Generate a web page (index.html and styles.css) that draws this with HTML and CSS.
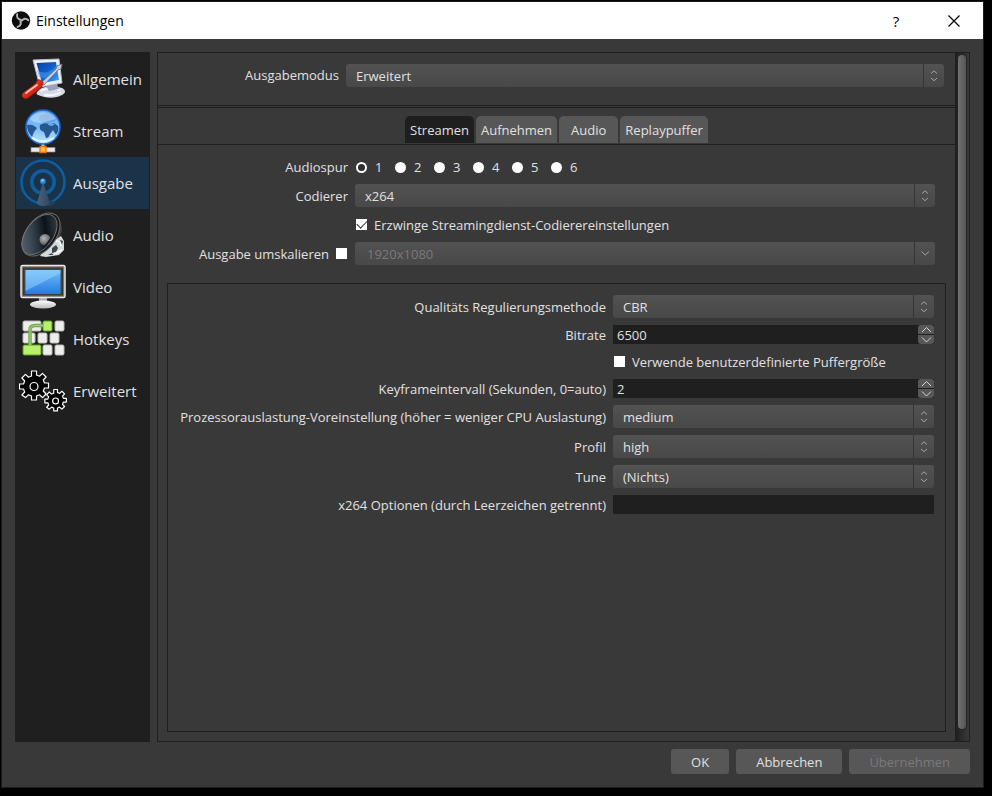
FILE: index.html
```html
<!DOCTYPE html>
<html lang="de">
<head>
<meta charset="utf-8">
<title>Einstellungen</title>
<link rel="stylesheet" href="styles.css">
</head>
<body>
<svg class="defs" width="0" height="0" aria-hidden="true">
  <defs>
    <symbol id="updown" viewBox="0 0 20 23"><path d="M7 9.500 10 6.800 13 9.500M7 14 10 16.700 13 14"/></symbol>
    <symbol id="down" viewBox="0 0 20 23"><path d="M6.500 9.500 10.200 13 14 9.500"/></symbol>
    <symbol id="spin-up" viewBox="0 0 16 9"><path d="M4 7 8.500 2.500 13 7"/></symbol>
    <symbol id="spin-down" viewBox="0 0 16 9"><path d="M4 2.500 8.500 7 13 2.500"/></symbol>
  </defs>
</svg>
<div class="window">
  <header class="titlebar">
    <svg class="logo" width="20" height="20" viewBox="0 0 20 20" aria-hidden="true">
      <circle cx="10" cy="9.500" r="9.200" fill="#0c0c0c"/>
      <g fill="none" stroke="#b4b4b4" stroke-width="2" stroke-linecap="round">
        <path d="M6.200 3.300c-.8 3 .8 5 3.600 5.400"/>
        <path d="M6.200 3.300c-.8 3 .8 5 3.600 5.400" transform="rotate(120 10 9.500)"/>
        <path d="M6.200 3.300c-.8 3 .8 5 3.600 5.400" transform="rotate(240 10 9.500)"/>
      </g>
    </svg>
    <h1 class="title">Einstellungen</h1>
    <button class="caption help" type="button" aria-label="Hilfe">?</button>
    <button class="caption close" type="button" aria-label="Schließen">
      <svg width="12" height="12" viewBox="0 0 12 12"><path d="M.5.5l11 11M11.500.5l-11 11" stroke="#000" stroke-width="1.200"/></svg>
    </button>
  </header>

  <div class="content">
    <div class="panes">
      <nav class="sidebar">
        <a class="item" href="#allgemein">
          <svg width="48" height="48" viewBox="0 0 48 48" aria-hidden="true">
            <defs>
              <linearGradient id="g-scr" x1="0" y1="0" x2="1" y2="1"><stop offset="0" stop-color="#0a3d9e"/><stop offset=".6" stop-color="#1268d8"/><stop offset="1" stop-color="#4bb0ff"/></linearGradient>
              <linearGradient id="g-red" x1="0" y1="0" x2="1" y2="1"><stop offset="0" stop-color="#ff8a76"/><stop offset=".5" stop-color="#dd2a18"/><stop offset="1" stop-color="#9b0f08"/></linearGradient>
            </defs>
            <path d="M19 36c4-5 15-6 24-3 4 2 4 5 0 7-7 4-17 3-24 0-2-1-2-2 0-4z" fill="#d5d9e6"/>
            <path d="M21 36c6-3 13-3 20-1M25 40c7 1 12 0 17-3" stroke="#f8f9ff" stroke-width="2" fill="none"/>
            <path d="M26 30l12-1 2 5-10 2z" fill="#9aa1b8"/>
            <path d="M14 5 40 4l3 24-22 4z" fill="#edf0f8" stroke="#b5bbcc"/>
            <path d="M17.500 8 37 7l3 18-17 3z" fill="url(#g-scr)"/>
            <path d="M18 15c8 5 14 2 20-5l1 8c-7 5-13 6-19 4z" fill="#4ba2f0" opacity=".5"/>
            <path d="M22 28 37 14l1-3 5-2-1 5-3 1-14 15z" fill="#c9ced9" stroke="#666e80" stroke-width=".8"/>
            <path d="M19 25c2-1 6 2 5 4l-2 4L9 43c-3 2-8-1-5-5l12-9z" fill="url(#g-red)" stroke="#8d140d" stroke-width=".7"/>
            <path d="M7 38 18 30" stroke="#ffc1b5" stroke-width="1.800" stroke-linecap="round"/>
          </svg>
          <span>Allgemein</span></a>
        <a class="item" href="#stream">
          <svg width="48" height="48" viewBox="0 0 48 48" aria-hidden="true">
            <defs><linearGradient id="g-globe" x1="0" y1="0" x2="0" y2="1"><stop offset="0" stop-color="#63aef5"/><stop offset=".5" stop-color="#79b9fa"/><stop offset="1" stop-color="#bfe4ff"/></linearGradient></defs>
            <path d="M24 34v10" stroke="#d8d8d8" stroke-width="3"/>
            <path d="M12 40.500h24v4.500H12z" fill="#e9e9ee" stroke="#8c8c96" stroke-width=".7"/>
            <path d="M21 39.500h6v6h-6z" fill="#ffc234" stroke="#ef6d12" stroke-width="1.300"/>
            <circle cx="24" cy="20" r="17" fill="url(#g-globe)" stroke="#1767cb" stroke-width="1.600"/>
            <path d="M8 18c4-1 7 0 10 3l-3 4-2 5c-3-3-5-7-5-12zM21 18c3-2 6-2 10-1l4-1 4 3c1 4 0 6-2 9l-3-5-3 4c-1 3-2 4-4 4l-2-6c-3-1-5-3-4-7z" fill="#24588f"/>
            <path d="M30 16l6 1-3 2-4-1z" fill="#69aaf0"/>
            <path d="M20 10c4-5 13-4 18 2-3 4-14 5-18 1z" fill="#5d9ad8" opacity=".8"/>
            <path d="M11 12C16 3 31 3 37 12c-8 2-17 6-24 2z" fill="#fff" opacity=".35"/>
            <path d="M13 31c7 4 15 4 22 0" fill="none" stroke="#e8f7ff" stroke-width="2"/>
          </svg>
          <span>Stream</span></a>
        <a class="item active" href="#ausgabe" aria-current="page">
          <svg width="48" height="48" viewBox="0 0 48 48" aria-hidden="true">
            <defs>
              <linearGradient id="g-cone" x1="0" x2="1"><stop offset="0" stop-color="#4a627c"/><stop offset="1" stop-color="#30465f"/></linearGradient>
              <radialGradient id="g-dot" cx=".4" cy=".3"><stop offset="0" stop-color="#8fd2ff"/><stop offset="1" stop-color="#1476d0"/></radialGradient>
            </defs>
            <circle cx="24" cy="23" r="21.500" fill="none" stroke="#0f5d9f" stroke-width="2.500"/>
            <circle cx="24" cy="23" r="11.200" fill="none" stroke="#0f5d9f" stroke-width="3.500"/>
            <ellipse cx="28" cy="44" rx="8" ry="3" fill="#263f5a"/>
            <path d="M24 23 31 44c-3 4-11 4-13 0z" fill="url(#g-cone)"/>
            <circle cx="24" cy="22.500" r="2.900" fill="url(#g-dot)"/>
          </svg>
          <span>Ausgabe</span></a>
        <a class="item" href="#audio">
          <svg width="48" height="48" viewBox="0 0 48 48" aria-hidden="true">
            <defs>
              <linearGradient id="g-horn" x1="0" x2="1" y1=".2" y2=".8"><stop offset="0" stop-color="#586773"/><stop offset=".35" stop-color="#33414d"/><stop offset=".65" stop-color="#0c1219"/><stop offset="1" stop-color="#39434c"/></linearGradient>
              <radialGradient id="g-cap" cx=".4" cy=".4"><stop offset="0" stop-color="#b6b6b4"/><stop offset="1" stop-color="#6b6c6e"/></radialGradient>
            </defs>
            <path d="M37 5c4 4 6 9 6 15l-5 13-12 11 1-12z" fill="#3c403e"/>
            <path d="M30 33 42 25l3 5v9l-5 5-13 2-6-1z" fill="#d4dadd"/>
            <path d="M33 37l4-3 2 3-2 4-4 1zM41 29l3 1-1 4zM29 44l4-2 1 2z" fill="#3c4549"/>
            <path d="M37 30c3 0 5 2 5 5M35 43l8-4" stroke="#fff" stroke-width="1.500" fill="none"/>
            <ellipse cx="22" cy="23.500" rx="24.500" ry="15" transform="rotate(-53 22 23.500)" fill="#171717" stroke="#686a66"/>
            <ellipse cx="20.500" cy="23.500" rx="23" ry="13.500" transform="rotate(-53 20.500 23.500)" fill="url(#g-horn)" stroke="#77797a" stroke-width=".8"/>
            <circle cx="26" cy="28.500" r="5.500" fill="url(#g-cap)"/>
            <path d="M23 37c5-3 8-7 10-12" fill="none" stroke="#1a1f24" stroke-width="2"/>
          </svg>
          <span>Audio</span></a>
        <a class="item" href="#video">
          <svg width="48" height="48" viewBox="0 0 48 48" aria-hidden="true">
            <defs>
              <linearGradient id="g-tv" x1="0" x2="0" y1="0" y2="1"><stop offset="0" stop-color="#6cc0f8"/><stop offset="1" stop-color="#2879e3"/></linearGradient>
              <linearGradient id="g-foot" x1="0" x2="0" y1="0" y2="1"><stop offset="0" stop-color="#fff"/><stop offset="1" stop-color="#b9b9b9"/></linearGradient>
            </defs>
            <path d="M20 33h8v8h-8z" fill="#aaa"/>
            <ellipse cx="24" cy="41.500" rx="13" ry="4" fill="url(#g-foot)"/>
            <rect x="2" y="2.500" width="44" height="32" rx="1.500" fill="#777" stroke="#e9e9e9" stroke-width="1.500"/>
            <rect x="4.500" y="5" width="39" height="27" fill="#444" stroke="#343434"/>
            <rect x="6.500" y="7" width="35" height="24" fill="url(#g-tv)"/>
            <path d="M6.500 7h35v3L6.500 28z" fill="#9bd5ff" opacity=".5"/>
          </svg>
          <span>Video</span></a>
        <a class="item" href="#hotkeys">
          <svg width="48" height="48" viewBox="0 0 48 48" aria-hidden="true">
            <g fill="#ededeb" stroke="#b7b8b4">
              <rect x="4" y="6" width="18" height="10" rx="1.500"/><rect x="36" y="6" width="9" height="10" rx="1.500"/>
              <rect x="4" y="18" width="12" height="10" rx="1.500"/><rect x="19" y="18" width="9" height="10" rx="1.500"/><rect x="31" y="18" width="9" height="10" rx="1.500"/>
              <rect x="24" y="30" width="9" height="10" rx="1.500"/><rect x="36" y="30" width="9" height="10" rx="1.500"/>
            </g>
            <g fill="#b8ef6f" stroke="#5aa313">
              <rect x="24" y="6" width="9" height="10" rx="1.500"/><rect x="4" y="30" width="18" height="10" rx="1.500"/>
            </g>
            <path d="M11 30V15q0-4.500 5-4.500h8" fill="none" stroke="#75ac4c" stroke-width="3.500"/>
            <path d="M11 30V15q0-4.500 5-4.500h8" fill="none" stroke="#a6cc89" stroke-width="1"/>
          </svg>
          <span>Hotkeys</span></a>
        <a class="item" href="#erweitert">
          <svg width="48" height="48" viewBox="0 0 48 48" aria-hidden="true">
            <g transform="translate(0 2)" fill="#000" stroke="#fff" stroke-width="1.200" stroke-linejoin="round">
              <path d="M12.500 2h5v4l3 1.200 3-2.800 3.600 3.600-2.800 3 1.200 3h4v5h-4l-1.200 3 2.800 3-3.600 3.600-3-2.800-3 1.200v4h-5v-4l-3-1.200-3 2.800L2.900 26l2.800-3L4.500 20h-4v-5h4l1.200-3-2.800-3 3.600-3.600 3 2.800 3-1.200z"/>
              <circle cx="15" cy="17.500" r="4"/>
            </g>
            <g transform="translate(25.500 21) scale(.74)" fill="#000" stroke="#fff" stroke-width="1.600" stroke-linejoin="round">
              <path d="M12.500 2h5v4l3 1.200 3-2.800 3.600 3.600-2.800 3 1.200 3h4v5h-4l-1.200 3 2.800 3-3.600 3.600-3-2.800-3 1.200v4h-5v-4l-3-1.200-3 2.800L2.900 26l2.800-3L4.500 20h-4v-5h4l1.200-3-2.800-3 3.600-3.600 3 2.800 3-1.200z"/>
              <circle cx="15" cy="17.500" r="4"/>
            </g>
          </svg>
          <span>Erweitert</span></a>
      </nav>

      <main class="frame">
        <div class="page">
          <section class="mode">
            <label for="mode">Ausgabemodus</label>
            <div class="combo"><select id="mode"><option>Erweitert</option><option>Einfach</option></select><svg class="arrow"><use href="#updown"/></svg></div>
          </section>

          <section class="tabarea">
            <div class="tabs" role="tablist">
              <button class="tab selected" role="tab" aria-selected="true" type="button">Streamen</button>
              <button class="tab" role="tab" aria-selected="false" type="button">Aufnehmen</button>
              <button class="tab wide" role="tab" aria-selected="false" type="button">Audio</button>
              <button class="tab" role="tab" aria-selected="false" type="button">Replaypuffer</button>
            </div>

            <div class="pane" role="tabpanel">
              <div class="form outer">
                <span class="label" id="track">Audiospur</span>
                <div class="radios" role="radiogroup" aria-labelledby="track">
                  <label class="radio"><input type="radio" name="track" checked>1</label>
                  <label class="radio"><input type="radio" name="track">2</label>
                  <label class="radio"><input type="radio" name="track">3</label>
                  <label class="radio"><input type="radio" name="track">4</label>
                  <label class="radio"><input type="radio" name="track">5</label>
                  <label class="radio"><input type="radio" name="track">6</label>
                </div>

                <label class="label" for="encoder">Codierer</label>
                <div class="combo"><select id="encoder"><option>x264</option></select><svg class="arrow"><use href="#updown"/></svg></div>

                <label class="check field"><input type="checkbox" checked>Erzwinge Streamingdienst-Codierereinstellungen</label>

                <label class="check trailing">Ausgabe umskalieren<input type="checkbox"></label>
                <div class="combo"><select id="rescale" aria-label="Auflösung" disabled><option>1920x1080</option></select><svg class="arrow"><use href="#down"/></svg></div>
              </div>

              <div class="group">
                <div class="form inner">
                  <label class="label" for="rate">Qualitäts Regulierungsmethode</label>
                  <div class="combo"><select id="rate"><option>CBR</option></select><svg class="arrow"><use href="#updown"/></svg></div>

                  <label class="label" for="bitrate">Bitrate</label>
                  <div class="spin"><input id="bitrate" type="text" inputmode="numeric" value="6500">
                    <button type="button" aria-label="Bitrate erhöhen"><svg><use href="#spin-up"/></svg></button>
                    <button type="button" aria-label="Bitrate verringern"><svg><use href="#spin-down"/></svg></button></div>

                  <label class="check field"><input type="checkbox">Verwende benutzerdefinierte Puffergröße</label>

                  <label class="label" for="keyint">Keyframeintervall (Sekunden, 0=auto)</label>
                  <div class="spin"><input id="keyint" type="text" inputmode="numeric" value="2">
                    <button type="button" aria-label="Intervall erhöhen"><svg><use href="#spin-up"/></svg></button>
                    <button type="button" aria-label="Intervall verringern"><svg><use href="#spin-down"/></svg></button></div>

                  <label class="label" for="preset">Prozessorauslastung-Voreinstellung (höher = weniger CPU Auslastung)</label>
                  <div class="combo"><select id="preset"><option>medium</option></select><svg class="arrow"><use href="#updown"/></svg></div>

                  <label class="label" for="profile">Profil</label>
                  <div class="combo"><select id="profile"><option>high</option></select><svg class="arrow"><use href="#updown"/></svg></div>

                  <label class="label" for="tune">Tune</label>
                  <div class="combo"><select id="tune"><option>(Nichts)</option></select><svg class="arrow"><use href="#updown"/></svg></div>

                  <label class="label" for="options">x264 Optionen (durch Leerzeichen getrennt)</label>
                  <input class="text" id="options" type="text">
                </div>
              </div>
            </div>
          </section>
        </div>
        <div class="scrollbar" aria-hidden="true"><div class="thumb"></div></div>
      </main>
    </div>

    <footer class="actions">
      <button class="btn" type="button">OK</button>
      <button class="btn" type="button">Abbrechen</button>
      <button class="btn" type="button" disabled>Übernehmen</button>
    </footer>
  </div>
</div>
</body>
</html>
```
FILE: styles.css
```css
:root {
  --bg: #3a3939;
  --dark: #1f1f1f;
  --text: #e1e0e1;
  --muted: #7a797a;
  --font: "Open Sans", "Noto Sans", sans-serif;
}

* { box-sizing: border-box; }

body {
  margin: 0;
  min-height: 100vh;
  padding: 1px 8px 8px 1px;
  display: flex;
  background: #000;
  color: var(--text);
  font: 13px/20px var(--font);
}

button, input, select { font: inherit; color: inherit; margin: 0; border: 0; }

.defs { position: absolute; }

.window {
  flex: 1;
  display: flex;
  flex-direction: column;
  border: 1px solid #1c1c1c;
  background: var(--bg);
}

/* Title bar */
.titlebar {
  display: flex;
  align-items: center;
  height: 37px;
  padding-left: 9px;
  background: #fff;
  color: #000;
}
.logo { margin-right: 5px; }
.title { margin: 0; flex: 1; font-size: 14px; font-weight: 400; }
.caption {
  display: grid;
  place-items: center;
  width: 58px;
  height: 37px;
  padding: 0;
  background: none;
  font-size: 15px;
}

/* Layout */
.content { flex: 1; display: flex; flex-direction: column; gap: 7px; padding: 13px; }
.panes { flex: 1; display: flex; gap: 7px; }

.sidebar { width: 135px; padding: 1px; background: var(--dark); }
.item {
  display: flex;
  align-items: center;
  gap: 6px;
  height: 52px;
  padding-left: 3px;
  color: inherit;
  font-size: 15px;
  text-decoration: none;
}
.item.active { background: #1b3348; }

.frame { flex: 1; display: flex; border: 1px solid var(--dark); }
.page { flex: 1; display: flex; flex-direction: column; }

.mode {
  display: grid;
  grid-template-columns: 181px 1fr;
  gap: 7px;
  align-items: start;
  height: 53px;
  padding: 11px 11px 0 0;
  border-bottom: 1px solid var(--dark);
}
.mode label { text-align: right; line-height: 23px; }

.tabarea {
  flex: 1;
  display: flex;
  flex-direction: column;
  margin-top: 1px;
  border-top: 1px solid var(--dark);
}
.tabs {
  display: flex;
  justify-content: center;
  align-items: flex-end;
  gap: 2px;
  height: 37px;
  padding-bottom: 1px;
  border-bottom: 1px solid var(--dark);
}
.tab {
  height: 27px;
  padding: 0 5px;
  border-radius: 5px 5px 0 0;
  background: #575757;
}
.tab.wide { padding: 0 12px; }
.tab.selected { background: var(--dark); }

.pane { flex: 1; display: flex; flex-direction: column; gap: 18px; padding: 12px 9px 9px; }

/* Forms */
.form { display: grid; gap: 7px; align-items: center; }
.outer { grid-template-columns: 181px 1fr; grid-template-rows: 20px 23px 21px 23px; padding-right: 11px; }
.inner { grid-template-columns: 428px 1fr; grid-template-rows: 23px 19px 21px 19px 23px 23px 23px 19px; }
.label { text-align: right; white-space: nowrap; }

.group { flex: 1; padding: 11px 11px 11px 10px; border: 1px solid var(--dark); }

.combo { display: grid; grid-template-columns: 1fr 21px; height: 23px; }
.combo select {
  grid-area: 1 / 1 / 2 / 3;
  appearance: none;
  width: 100%;
  height: 23px;
  padding: 0 30px 0 10px;
  border-radius: 3px;
  background: linear-gradient(#525252, #484848);
}
.combo select:disabled { padding-left: 12px; color: var(--muted); opacity: 1; }
.arrow {
  grid-area: 1 / 2;
  z-index: 1;
  width: 21px;
  height: 23px;
  border-left: 1px solid #353535;
  pointer-events: none;
  fill: none;
  stroke: #a5a5a5;
}

.text, .spin { height: 19px; background: var(--dark); }
.text { width: 100%; padding: 0 4px; }
.spin { display: grid; grid-template: 9px 9px / 1fr 16px; row-gap: 1px; }
.spin input { grid-area: 1 / 1 / 3 / 2; min-width: 0; padding: 0 4px; background: none; }
.spin button { display: block; padding: 0; border-radius: 3px 3px 0 0; background: #575757; }
.spin button:last-child { border-radius: 0 0 3px 3px; }
.spin svg { display: block; width: 16px; height: 9px; fill: none; stroke: #d5d5d5; }

.radios { display: flex; }
.radio { display: flex; align-items: center; gap: 8px; width: 39px; padding-left: 1px; }
.radio input {
  appearance: none;
  width: 11px;
  height: 11px;
  border-radius: 50%;
  background: #fff;
}
.radio input:checked { border: 2px solid #fff; background: #303030; }

.check { display: flex; align-items: center; gap: 7px; white-space: nowrap; }
.check input {
  appearance: none;
  display: grid;
  width: 11px;
  height: 11px;
  background: #fff;
}
.check input:checked::before {
  content: "";
  width: 9px;
  height: 5px;
  margin: 1px 0 0 1px;
  border: solid #303030;
  border-width: 0 0 1px 1px;
  rotate: -45deg;
}
.field { grid-column: 2; padding-left: 1px; }
.trailing { justify-content: flex-end; padding-right: 1px; }

/* Scroll bar */
.scrollbar { display: flex; width: 14px; padding: 2px 3px 12px; background: linear-gradient(90deg, #1e1e1e, #3a3939); }
.thumb { flex: 1; border-radius: 4px; background: linear-gradient(90deg, #707070, #555); box-shadow: 0 0 0 1px #232323; }

/* Dialog buttons */
.actions { display: flex; justify-content: flex-end; gap: 7px; }
.btn { height: 25px; padding: 0 20px; border-radius: 3px; background: #575757; }
.btn:disabled { color: var(--muted); }
```
